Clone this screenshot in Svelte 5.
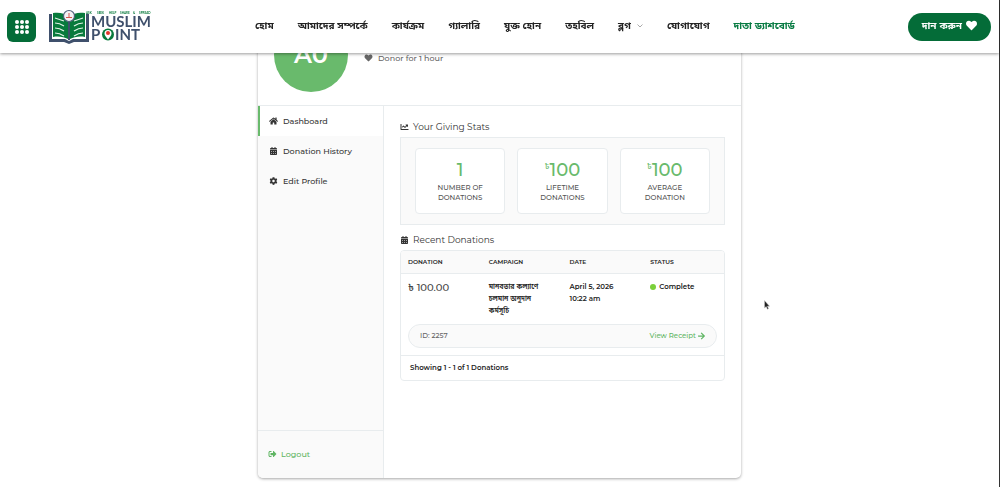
<script>
  const menu = [
    { label: "হোম" },
    { label: "আমাদের সম্পর্কে" },
    { label: "কার্যক্রম" },
    { label: "গ্যালারি" },
    { label: "যুক্ত হোন" },
    { label: "তহবিল" },
    { label: "ব্লগ", sub: true },
    { label: "যোগাযোগ" },
    { label: "দাতা ড্যাশবোর্ড", active: true },
  ];

  const tagline = [
    { word: "ASK", x: 38 },
    { word: "SEEK", x: 49 },
    { word: "HELP", x: 61 },
    { word: "SHARE", x: 72 },
    { word: "&", x: 85 },
    { word: "SPREAD", x: 91 },
  ];

  const tabs = [
    { label: "Dashboard", icon: "home", active: true },
    { label: "Donation History", icon: "calendar" },
    { label: "Edit Profile", icon: "cog" },
  ];

  const stats = [
    { value: "1", lines: ["Number of", "donations"] },
    { value: "100", currency: true, lines: ["Lifetime", "donations"] },
    { value: "100", currency: true, lines: ["Average", "donation"] },
  ];

  const columns = ["Donation", "Campaign", "Date", "Status"];

  const icons = {
    heart: { box: "0 0 512 512", d: "M462.3 62.6C407.5 15.9 326 24.3 275.7 76.2L256 96.5l-19.7-20.3C186.1 24.3 104.5 15.9 49.7 62.6c-62.8 53.6-66.1 149.8-9.9 207.9l193.5 199.8c12.5 12.9 32.8 12.9 45.3 0l193.5-199.8c56.3-58.1 53-154.3-9.8-207.9z" },
    home: { box: "0 0 576 512", d: "M280.37 148.26L96 300.11V464a16 16 0 0 0 16 16l112.06-.29a16 16 0 0 0 15.92-16V368a16 16 0 0 1 16-16h64a16 16 0 0 1 16 16v95.64a16 16 0 0 0 16 16.05L464 480a16 16 0 0 0 16-16V300L295.67 148.26a12.19 12.19 0 0 0-15.3 0zM571.6 251.47L488 182.56V44.05a12 12 0 0 0-12-12h-56a12 12 0 0 0-12 12v72.61L318.47 43a48 48 0 0 0-61 0L4.34 251.47a12 12 0 0 0-1.6 16.9l25.5 31A12 12 0 0 0 45.15 301l235.22-193.74a12.19 12.19 0 0 1 15.3 0L530.9 301a12 12 0 0 0 16.9-1.6l25.5-31a12 12 0 0 0-1.7-16.93z" },
    calendar: { box: "0 0 448 512", d: "M0 464c0 26.5 21.5 48 48 48h352c26.5 0 48-21.5 48-48V192H0zM80 264h48v48H80zm120 0h48v48h-48zm120 0h48v48h-48zM80 384h48v48H80zm120 0h48v48h-48zm120 0h48v48h-48zM400 64h-48V16c0-8.8-7.2-16-16-16h-32c-8.8 0-16 7.2-16 16v48H160V16c0-8.8-7.2-16-16-16h-32c-8.8 0-16 7.2-16 16v48H48C21.5 64 0 85.5 0 112v48h448v-48c0-26.5-21.5-48-48-48z" },
    cog: { box: "0 0 512 512", d: "M487.4 315.7l-42.6-24.6c4.3-23.2 4.3-47 0-70.2l42.6-24.6c4.9-2.8 7.1-8.6 5.5-14-11.1-35.6-30-67.8-54.7-94.6-3.8-4.1-10-5.1-14.8-2.3L380.8 110c-17.9-15.4-38.5-27.3-60.8-35.1V25.8c0-5.6-3.9-10.5-9.4-11.7-36.7-8.2-74.3-7.8-109.2 0-5.5 1.2-9.4 6.1-9.4 11.7V75c-22.2 7.9-42.8 19.8-60.8 35.1L88.7 85.5c-4.9-2.8-11-1.9-14.8 2.3-24.7 26.7-43.6 58.9-54.7 94.6-1.7 5.4.6 11.2 5.5 14L67.3 221c-4.3 23.2-4.3 47 0 70.2l-42.6 24.6c-4.9 2.8-7.1 8.6-5.5 14 11.1 35.6 30 67.8 54.7 94.6 3.8 4.1 10 5.1 14.8 2.3l42.6-24.6c17.9 15.4 38.5 27.3 60.8 35.1v49.2c0 5.6 3.9 10.5 9.4 11.7 36.7 8.2 74.3 7.8 109.2 0 5.5-1.2 9.4-6.1 9.4-11.7v-49.2c22.2-7.9 42.8-19.8 60.8-35.1l42.6 24.6c4.9 2.8 11 1.9 14.8-2.3 24.7-26.7 43.6-58.9 54.7-94.6 1.5-5.5-.7-11.3-5.6-14.1zM256 336c-44.1 0-80-35.9-80-80s35.9-80 80-80 80 35.9 80 80-35.9 80-80 80z" },
    chart: { box: "0 0 512 512", d: "M496 384H64V80c0-8.84-7.16-16-16-16H16C7.16 64 0 71.16 0 80v336c0 17.67 14.33 32 32 32h464c8.84 0 16-7.16 16-16v-32c0-8.84-7.16-16-16-16zM464 96H345.94c-21.38 0-32.09 25.85-16.97 40.97l32.4 32.4L288 242.75l-73.37-73.37c-12.5-12.5-32.76-12.5-45.25 0l-68.69 68.69c-6.25 6.25-6.25 16.38 0 22.63l22.62 22.62c6.25 6.25 16.38 6.25 22.63 0L192 237.25l73.37 73.37c12.5 12.5 32.76 12.5 45.25 0l96-96 32.4 32.4c15.12 15.12 40.97 4.41 40.97-16.97V112c.01-8.84-7.15-16-15.99-16z" },
    logout: { box: "0 0 512 512", d: "M497 273L329 441c-15 15-41 4.5-41-17v-96H152c-13.3 0-24-10.7-24-24v-96c0-13.3 10.7-24 24-24h136V88c0-21.4 25.9-32 41-17l168 168c9.3 9.4 9.3 24.6 0 34zM192 436v-40c0-6.6-5.4-12-12-12H96c-17.7 0-32-14.3-32-32V160c0-17.7 14.3-32 32-32h84c6.6 0 12-5.4 12-12V76c0-6.6-5.4-12-12-12H96c-53 0-96 43-96 96v192c0 53 43 96 96 96h84c6.6 0 12-5.4 12-12z" },
    arrow: { box: "0 0 448 512", d: "M190.5 66.9l22.2-22.2c9.4-9.4 24.6-9.4 33.9 0L441 239c9.4 9.4 9.4 24.6 0 33.9L246.6 467.3c-9.4 9.4-24.6 9.4-33.9 0l-22.2-22.2c-9.5-9.5-9.3-25 .4-34.3L311.4 296H24c-13.3 0-24-10.7-24-24v-32c0-13.3 10.7-24 24-24h287.4L190.9 101.2c-9.8-9.3-10-24.8-.4-34.3z" },
  };
</script>

{#snippet icon(name)}
  <svg class="icon" viewBox={icons[name].box} aria-hidden="true">
    <path d={icons[name].d} fill-rule="evenodd" />
  </svg>
{/snippet}

<div class="page">
  <header class="topbar">
    <div class="brand">
      <button class="apps" type="button" aria-label="Menu">
        <svg viewBox="0 0 14 14" aria-hidden="true">
          {#each [2, 7, 12] as y}
            {#each [2, 7, 12] as x}
              <circle cx={x} cy={y} r="2" />
            {/each}
          {/each}
        </svg>
      </button>
      <a class="logo" href="#home" aria-label="Muslim Point">
        <svg viewBox="0 0 104 36" aria-hidden="true">
          <path class="navy" d="M1 5h3v25h13l4 2 4-2h13V5h3v28H26l-5 2-5-2H1z" />
          <path class="leaf" d="M5 4c6-1 12 0 15 4v22c-4-2-9-3-15-2zM37 4c-6-1-12 0-15 4v22c4-2 9-3 15-2z" />
          <path class="navy" d="M20 10h2v21h-2z" />
          <path class="veins" d="M7 9l9 3M7 14c3 0 6 1 9 3M7 19c3 0 6 1 9 3M7 24c3 0 6 1 9 3M35 9l-9 3M35 14c-3 0-6 1-9 3M35 19c-3 0-6 1-9 3M35 24c-3 0-6 1-9 3" />
          <circle class="lens" cx="21" cy="7" r="5.5" />
          <path class="mark" d="M21 4v4M18 8.5h6" />
          {#each tagline as t}
            <text class="tag" x={t.x} y="5">{t.word}</text>
          {/each}
          <text class="name" x="43" y="18">MUSLIM</text>
          <text class="name" x="43" y="31">P</text>
          <circle class="leaf" cx="60" cy="25.5" r="6" />
          <path class="pin" d="M60 30.5c-2-2.5-3.5-4-3.5-6a3.5 3.5 0 0 1 7 0c0 2-1.5 3.5-3.5 6z" />
          <circle class="dot" cx="60" cy="24" r="2" />
          <text class="name" x="67" y="31">INT</text>
        </svg>
      </a>
    </div>

    <nav class="menu">
      {#each menu as m}
        <a href="#menu" class:active={m.active}>
          {m.label}
          {#if m.sub}
            <svg class="chevron" viewBox="0 0 6 4" aria-hidden="true"><path d="M.5.5L3 3 5.5.5" /></svg>
          {/if}
        </a>
      {/each}
    </nav>

    <button class="donate" type="button">দান করুন {@render icon("heart")}</button>
  </header>

  <main>
    <section class="card">
      <div class="profile">
        <div class="avatar">A0</div>
        <p class="since">{@render icon("heart")} Donor for 1 hour</p>
      </div>

      <div class="body">
        <aside class="sidebar">
          <nav>
            {#each tabs as t}
              <a class="tab" class:current={t.active} href="#tab">{@render icon(t.icon)} {t.label}</a>
            {/each}
          </nav>
          <div class="logout">
            <a href="#logout">{@render icon("logout")} Logout</a>
          </div>
        </aside>

        <div class="content">
          <h2>{@render icon("chart")} Your Giving Stats</h2>
          <div class="stats">
            {#each stats as s}
              <div class="stat">
                <div class="value">{#if s.currency}<span class="taka">৳</span>{/if}{s.value}</div>
                <div class="caption">{s.lines[0]}<br />{s.lines[1]}</div>
              </div>
            {/each}
          </div>

          <h2>{@render icon("calendar")} Recent Donations</h2>
          <div class="donations">
            <table>
              <thead>
                <tr>
                  {#each columns as c}<th scope="col">{c}</th>{/each}
                </tr>
              </thead>
              <tbody>
                <tr>
                  <td class="amount">৳ 100.00</td>
                  <td class="campaign">মানবতার কল্যাণে চলমান অনুদান কর্মসূচি</td>
                  <td>April 5, 2026<br />10:22 am</td>
                  <td><span class="status"></span>Complete</td>
                </tr>
                <tr>
                  <td class="receipt" colspan="4">
                    <div class="pill">
                      <span>ID: 2257</span>
                      <a href="#receipt">View Receipt {@render icon("arrow")}</a>
                    </div>
                  </td>
                </tr>
              </tbody>
              <tfoot>
                <tr><td colspan="4">Showing 1 - 1 of 1 Donations</td></tr>
              </tfoot>
            </table>
          </div>
        </div>
      </div>
    </section>
  </main>

  <svg class="pointer" viewBox="0 0 6 10" aria-hidden="true">
    <path d="M.5.5v7.5l1.700-1.400 1.200 2.700 1.200-.6-1.200-2.500h2.100z" />
  </svg>
</div>

<style>
  :global(body) {
    margin: 0;
    background: #fff;
  }

  .page {
    min-height: 100vh;
    box-sizing: border-box;
    border-right: 1px solid #333;
    display: flex;
    flex-direction: column;
    font-family: Montserrat, Inter, "Noto Sans Bengali", "Noto Sans", sans-serif;
    font-size: 8px;
    line-height: 12px;
    color: #333;
  }

  a {
    color: inherit;
    text-decoration: none;
  }

  button {
    font-family: inherit;
    border: 0;
    padding: 0;
    cursor: pointer;
  }

  .icon {
    width: 9px;
    height: 8px;
    flex: none;
    fill: currentColor;
  }

  .topbar {
    position: fixed;
    top: 0;
    left: 0;
    right: 1px;
    z-index: 10;
    height: 53px;
    box-sizing: border-box;
    padding: 0 8px 0 7px;
    display: flex;
    align-items: center;
    justify-content: space-between;
    background: #fff;
    box-shadow: 0 1px 3px rgba(0, 0, 0, 0.4);
  }

  .brand {
    display: flex;
    align-items: center;
    gap: 12px;
  }

  .apps {
    width: 29px;
    height: 30px;
    border-radius: 6px;
    background: #046c38;
    display: grid;
    place-items: center;
  }

  .apps svg {
    width: 14px;
    height: 14px;
    fill: #fff;
  }

  .logo svg {
    display: block;
    width: 104px;
    height: 36px;
  }

  .navy {
    fill: #3f506c;
  }

  .leaf {
    fill: #087a3c;
  }

  .veins {
    fill: none;
    stroke: #e3f3e8;
    stroke-width: 1.2;
  }

  .lens {
    fill: #f6f2f5;
    stroke: #4d5d78;
    stroke-width: 1.2;
  }

  .mark {
    fill: none;
    stroke: #d8564f;
  }

  .pin {
    fill: #fff;
  }

  .dot {
    fill: #e3342b;
  }

  .name {
    font: 700 15px Lato, sans-serif;
    fill: #3f506c;
  }

  .tag {
    font: 700 3px Lato, sans-serif;
    fill: #087a3c;
  }

  .menu {
    display: flex;
    gap: 24px;
    margin-right: 10px;
    padding-bottom: 2px;
    font-size: 10px;
    line-height: 16px;
    font-weight: 700;
    color: #222;
  }

  .menu a {
    display: flex;
    align-items: center;
    gap: 6px;
    white-space: nowrap;
  }

  .menu .active {
    color: #067a41;
  }

  .chevron {
    width: 6px;
    height: 4px;
    fill: none;
    stroke: #aaa;
  }

  .donate {
    height: 28px;
    padding: 0 14px 2px;
    border-radius: 14px;
    background: #046c38;
    color: #fff;
    font-size: 10px;
    font-weight: 700;
    display: flex;
    align-items: center;
    gap: 4px;
    white-space: nowrap;
  }

  .donate .icon {
    width: 11px;
    height: 11px;
  }

  main {
    flex: 1;
    display: flex;
    justify-content: center;
    padding: 2px 16px 9px;
  }

  .card {
    width: 100%;
    max-width: 483px;
    box-sizing: border-box;
    border-radius: 5px;
    overflow: hidden;
    background: #fff;
    box-shadow: 0 1px 3px rgba(0, 0, 0, 0.35);
    display: flex;
    flex-direction: column;
  }

  .profile {
    display: flex;
    align-items: center;
    gap: 16px;
    padding: 16px 16px 13px;
    border-bottom: 1px solid #e8ecee;
  }

  .avatar {
    width: 74px;
    height: 74px;
    border-radius: 50%;
    background: #69ba6c;
    color: #fff;
    font-size: 24px;
    font-weight: 600;
    display: grid;
    place-items: center;
  }

  .since {
    margin: 6px 0 0;
    display: flex;
    align-items: center;
    gap: 5px;
    font-weight: 500;
    color: #666;
  }

  .body {
    flex: 1;
    display: grid;
    grid-template-columns: 126px 1fr;
  }

  .sidebar {
    display: flex;
    flex-direction: column;
    justify-content: space-between;
    background: #fafafa;
    border-right: 1px solid #e8ecee;
    font-weight: 500;
  }

  .tab {
    height: 30px;
    box-sizing: border-box;
    display: flex;
    align-items: center;
    gap: 5px;
    padding-left: 9px;
    border-left: 2px solid transparent;
  }

  .tab.current {
    background: #fff;
    border-left-color: #69ba6c;
  }

  .logout {
    border-top: 1px solid #e8ecee;
    padding: 17px 10px 18px;
    color: #5fb563;
  }

  .logout a {
    display: flex;
    align-items: center;
    gap: 4px;
  }

  .content {
    min-width: 0;
    padding: 15px 16px;
  }

  h2 {
    margin: 0 0 4px;
    display: flex;
    align-items: center;
    gap: 4px;
    font-size: 9px;
    line-height: 12px;
    font-weight: 400;
    color: #333;
  }

  .stats {
    display: grid;
    grid-template-columns: repeat(3, 1fr);
    gap: 12px;
    padding: 10px 14px;
    margin-bottom: 9px;
    background: #fafafa;
    border: 1px solid #e8ecee;
  }

  .stat {
    background: #fff;
    border: 1px solid #e8ecee;
    border-radius: 4px;
    padding: 10px 4px;
    text-align: center;
  }

  .value {
    display: flex;
    justify-content: center;
    font-size: 18px;
    line-height: 22px;
    font-weight: 500;
    color: #69ba6c;
  }

  .taka {
    font-size: 8px;
    line-height: 14px;
  }

  .caption {
    margin-top: 2px;
    line-height: 10px;
    font-size: 7px;
    font-weight: 500;
    text-transform: uppercase;
    color: #555;
  }

  .donations {
    border: 1px solid #e8ecee;
    border-radius: 4px;
    overflow: hidden;
  }

  table {
    width: 100%;
    table-layout: fixed;
    border-collapse: collapse;
    font-size: 7px;
  }

  th,
  td {
    padding: 7px;
    text-align: left;
    vertical-align: top;
    font-weight: 600;
    color: #222;
  }

  th {
    padding: 5px 7px;
    font-size: 6px;
    text-transform: uppercase;
    background: #fafafa;
    border-bottom: 1px solid #e8ecee;
  }

  .amount {
    font-size: 10px;
    line-height: 14px;
    font-weight: 500;
    color: #444;
  }

  .campaign {
    padding-right: 12px;
  }

  .status {
    display: inline-block;
    width: 6px;
    height: 6px;
    margin-right: 3px;
    border-radius: 50%;
    background: #7ad03a;
    vertical-align: middle;
  }

  td.receipt {
    padding: 0 7px 7px;
  }

  .pill {
    display: flex;
    align-items: center;
    justify-content: space-between;
    height: 22px;
    padding: 0 11px;
    border: 1px solid #e8ecee;
    border-radius: 12px;
    background: #fafafa;
    font-weight: 500;
    color: #666;
  }

  .pill a {
    display: flex;
    align-items: center;
    gap: 2px;
    color: #5fb563;
  }

  .pill .icon {
    width: 7px;
  }

  tfoot td {
    padding: 6px 9px;
    border-top: 1px solid #e8ecee;
  }

  .pointer {
    position: absolute;
    left: 764px;
    top: 300px;
    width: 6px;
    height: 10px;
    fill: #222;
    stroke: #ccc;
    stroke-width: 0.5;
  }
</style>
